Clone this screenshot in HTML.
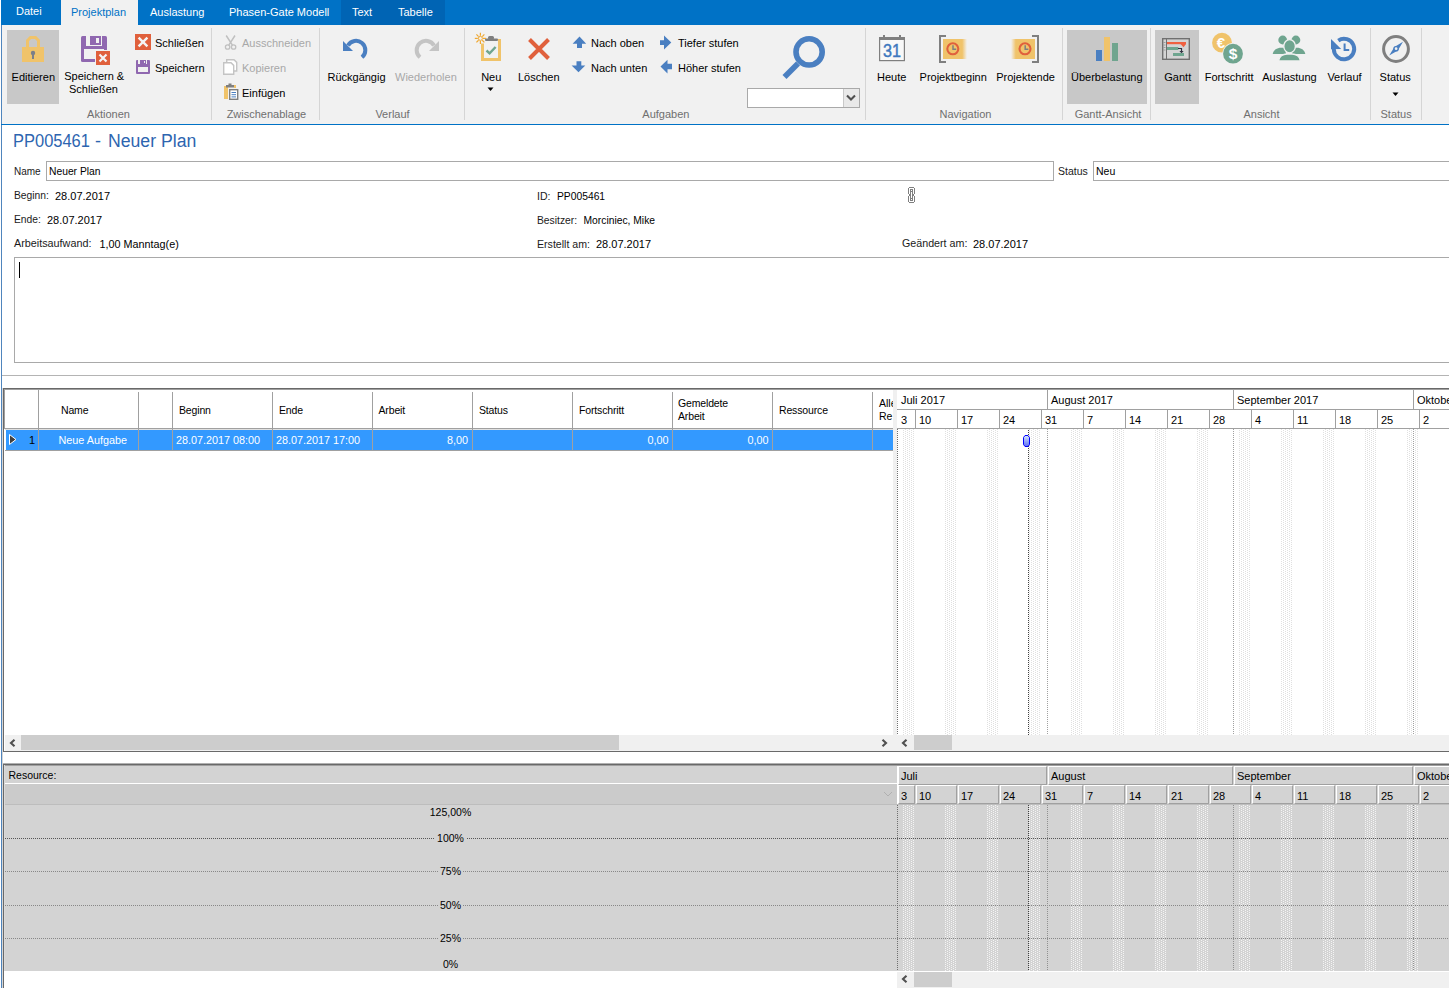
<!DOCTYPE html><html><head><meta charset="utf-8"><style>
html,body{margin:0;padding:0;}
body{width:1449px;height:988px;overflow:hidden;position:relative;background:#fff;font-family:"Liberation Sans", sans-serif;}
.a{position:absolute;}
.t{position:absolute;white-space:pre;}
svg{overflow:visible}
</style></head><body>
<div class="a" style="left:1px;top:0px;width:1448px;height:25px;background:#0072c6;"></div>
<div class="a" style="left:341px;top:0px;width:104px;height:25px;background:#0064b4;"></div>
<div class="a" style="left:61px;top:0px;width:77px;height:25px;background:#f1f1f1;"></div>
<div class="t" style="left:16px;top:6px;font-size:11px;line-height:11px;color:#fff;">Datei</div>
<div class="t" style="left:71px;top:7px;font-size:11px;line-height:11px;color:#0072c6;">Projektplan</div>
<div class="t" style="left:150px;top:7px;font-size:11px;line-height:11px;color:#fff;">Auslastung</div>
<div class="t" style="left:229px;top:7px;font-size:11px;line-height:11px;color:#fff;">Phasen-Gate Modell</div>
<div class="t" style="left:352px;top:7px;font-size:11px;line-height:11px;color:#fff;">Text</div>
<div class="t" style="left:398px;top:7px;font-size:11px;line-height:11px;color:#fff;">Tabelle</div>
<div class="a" style="left:2px;top:25px;width:1447px;height:99px;background:#f1f1f1;"></div>
<div class="a" style="left:1px;top:25px;width:1px;height:963px;background:#4f85bd;"></div>
<div class="a" style="left:1px;top:124px;width:1448px;height:1px;background:#0072c6;"></div>
<div class="a" style="left:211px;top:28px;width:1px;height:92px;background:#d5d5d5;"></div>
<div class="a" style="left:319px;top:28px;width:1px;height:92px;background:#d5d5d5;"></div>
<div class="a" style="left:464px;top:28px;width:1px;height:92px;background:#d5d5d5;"></div>
<div class="a" style="left:865px;top:28px;width:1px;height:92px;background:#d5d5d5;"></div>
<div class="a" style="left:1062px;top:28px;width:1px;height:92px;background:#d5d5d5;"></div>
<div class="a" style="left:1150px;top:28px;width:1px;height:92px;background:#d5d5d5;"></div>
<div class="a" style="left:1370px;top:28px;width:1px;height:92px;background:#d5d5d5;"></div>
<div class="a" style="left:1421px;top:28px;width:1px;height:92px;background:#d5d5d5;"></div>
<div class="a" style="left:7px;top:30px;width:52px;height:74px;background:#c8c8c8;"></div>
<div class="a" style="left:1067px;top:30px;width:80px;height:74px;background:#c8c8c8;"></div>
<div class="a" style="left:1155px;top:30px;width:44px;height:74px;background:#c8c8c8;"></div>
<div class="t" style="left:-26.700000000000003px;top:72px;width:120px;text-align:center;font-size:11px;line-height:11px;color:#000;">Editieren</div>
<div class="t" style="left:296.5px;top:72px;width:120px;text-align:center;font-size:11px;line-height:11px;color:#000;">Rückgängig</div>
<div class="t" style="left:431.25px;top:72px;width:120px;text-align:center;font-size:11px;line-height:11px;color:#000;">Neu</div>
<div class="t" style="left:478.79999999999995px;top:72px;width:120px;text-align:center;font-size:11px;line-height:11px;color:#000;">Löschen</div>
<div class="t" style="left:831.7px;top:72px;width:120px;text-align:center;font-size:11px;line-height:11px;color:#000;">Heute</div>
<div class="t" style="left:893.2px;top:72px;width:120px;text-align:center;font-size:11px;line-height:11px;color:#000;">Projektbeginn</div>
<div class="t" style="left:965.5999999999999px;top:72px;width:120px;text-align:center;font-size:11px;line-height:11px;color:#000;">Projektende</div>
<div class="t" style="left:1046.8px;top:72px;width:120px;text-align:center;font-size:11px;line-height:11px;color:#000;">Überbelastung</div>
<div class="t" style="left:1117.75px;top:72px;width:120px;text-align:center;font-size:11px;line-height:11px;color:#000;">Gantt</div>
<div class="t" style="left:1169.2px;top:72px;width:120px;text-align:center;font-size:11px;line-height:11px;color:#000;">Fortschritt</div>
<div class="t" style="left:1229.5px;top:72px;width:120px;text-align:center;font-size:11px;line-height:11px;color:#000;">Auslastung</div>
<div class="t" style="left:1284.5px;top:72px;width:120px;text-align:center;font-size:11px;line-height:11px;color:#000;">Verlauf</div>
<div class="t" style="left:1335.2px;top:72px;width:120px;text-align:center;font-size:11px;line-height:11px;color:#000;">Status</div>
<div class="t" style="left:365.9px;top:72px;width:120px;text-align:center;font-size:11px;line-height:11px;color:#a8a8a8;">Wiederholen</div>
<div class="t" style="left:34.25px;top:71px;width:120px;text-align:center;font-size:11px;line-height:11px;color:#000;">Speichern &amp;</div>
<div class="t" style="left:33.5px;top:84px;width:120px;text-align:center;font-size:11px;line-height:11px;color:#000;">Schließen</div>
<div class="t" style="left:155px;top:38px;font-size:11px;line-height:11px;color:#000;">Schließen</div>
<div class="t" style="left:155px;top:63px;font-size:11px;line-height:11px;color:#000;">Speichern</div>
<div class="t" style="left:242px;top:38px;font-size:11px;line-height:11px;color:#a8a8a8;">Ausschneiden</div>
<div class="t" style="left:242px;top:63px;font-size:11px;line-height:11px;color:#a8a8a8;">Kopieren</div>
<div class="t" style="left:242px;top:88px;font-size:11px;line-height:11px;color:#000;">Einfügen</div>
<div class="t" style="left:591px;top:38px;font-size:11px;line-height:11px;color:#000;">Nach oben</div>
<div class="t" style="left:591px;top:63px;font-size:11px;line-height:11px;color:#000;">Nach unten</div>
<div class="t" style="left:678px;top:38px;font-size:11px;line-height:11px;color:#000;">Tiefer stufen</div>
<div class="t" style="left:678px;top:63px;font-size:11px;line-height:11px;color:#000;">Höher stufen</div>
<div class="t" style="left:48.5px;top:109px;width:120px;text-align:center;font-size:11px;line-height:11px;color:#6f6f6f;">Aktionen</div>
<div class="t" style="left:206.39999999999998px;top:109px;width:120px;text-align:center;font-size:11px;line-height:11px;color:#6f6f6f;">Zwischenablage</div>
<div class="t" style="left:332.5px;top:109px;width:120px;text-align:center;font-size:11px;line-height:11px;color:#6f6f6f;">Verlauf</div>
<div class="t" style="left:605.9px;top:109px;width:120px;text-align:center;font-size:11px;line-height:11px;color:#6f6f6f;">Aufgaben</div>
<div class="t" style="left:905.5px;top:109px;width:120px;text-align:center;font-size:11px;line-height:11px;color:#6f6f6f;">Navigation</div>
<div class="t" style="left:1048.0px;top:109px;width:120px;text-align:center;font-size:11px;line-height:11px;color:#6f6f6f;">Gantt-Ansicht</div>
<div class="t" style="left:1201.5px;top:109px;width:120px;text-align:center;font-size:11px;line-height:11px;color:#6f6f6f;">Ansicht</div>
<div class="t" style="left:1336.1px;top:109px;width:120px;text-align:center;font-size:11px;line-height:11px;color:#6f6f6f;">Status</div>
<svg class="a" style="left:487px;top:87px" width="7" height="5" viewBox="0 0 7 5"><path d="M0.5 0.5h6l-3 3.5z" fill="#000"/></svg>
<svg class="a" style="left:1392px;top:92px" width="7" height="5" viewBox="0 0 7 5"><path d="M0.5 0.5h6l-3 3.5z" fill="#000"/></svg>
<div class="a" style="left:747px;top:88px;width:113px;height:20px;background:#fff;box-sizing:border-box;border:1px solid #a9a9a9;"></div>
<div class="a" style="left:843px;top:89px;width:16px;height:18px;background:#e9e9e9;border-left:1px solid #c9c9c9;box-sizing:border-box;"></div>
<svg class="a" style="left:846px;top:94px" width="10" height="8" viewBox="0 0 10 8"><path d="M1 1.5l4 4 4-4" fill="none" stroke="#505050" stroke-width="2.1"/></svg>
<svg class="a" style="left:0;top:0" width="1449" height="125" viewBox="0 0 1449 125">
<!-- lock -->
<rect x="22" y="47" width="22" height="15" fill="#f0c36a"/>
<path d="M27.5 47V40.5L30.5 37.5H35.5L38.5 40.5V47" fill="none" stroke="#f0c36a" stroke-width="3"/>
<circle cx="33" cy="53" r="2.2" fill="#7b7f8a"/><rect x="32" y="53" width="2" height="6" fill="#7b7f8a"/>
<!-- save & close -->
<rect x="81" y="36" width="26" height="26" rx="1.5" fill="#9068b0"/>
<rect x="86" y="36" width="4" height="10" fill="#f1f1f1"/>
<rect x="90" y="45" width="11" height="1" fill="#f1f1f1"/>
<rect x="101" y="36" width="1" height="10" fill="#f1f1f1"/>
<rect x="96" y="38" width="3" height="5" fill="#f1f1f1"/>
<rect x="84" y="49" width="20" height="10" fill="#f1f1f1"/>
<rect x="95" y="50" width="16" height="16" fill="#f1f1f1"/>
<rect x="96" y="51" width="14" height="14" fill="#e0603c"/>
<path d="M99.5 54.5L106.5 61.5M106.5 54.5L99.5 61.5" stroke="#f4f4f4" stroke-width="2.2"/>
<!-- small close -->
<rect x="135" y="34" width="16" height="16" fill="#e0603c"/>
<path d="M138.6 37.6L147.4 46.4M147.4 37.6L138.6 46.4" stroke="#f4f4f4" stroke-width="2.4"/>
<!-- small save -->
<rect x="136" y="60" width="14" height="14" rx="1" fill="#9068b0"/>
<rect x="138" y="60" width="2" height="4" fill="#f1f1f1"/>
<rect x="146" y="60" width="1" height="4" fill="#f1f1f1"/>
<rect x="144" y="61" width="1" height="2" fill="#f1f1f1"/>
<rect x="138" y="67" width="10" height="5" fill="#f1f1f1"/>
<!-- scissors -->
<g stroke="#c0c0c0" fill="none" stroke-width="1.3">
<circle cx="227.6" cy="47" r="2.2"/><circle cx="233.6" cy="47" r="2.2"/>
<path d="M228.8 45.2L235 35.5M232.4 45.2L226.2 35.5" stroke-width="1.5"/>
</g>
<!-- copy -->
<g stroke="#c4c4c4" stroke-width="1.4" fill="#fff">
<path d="M226.7 59.7H234L236.7 62.4V71H226.7Z"/>
<path d="M223.7 62.7H231L233.7 65.4V74.3H223.7Z"/>
</g>
<!-- paste -->
<rect x="224" y="86" width="4" height="13" fill="#f0c36a"/>
<rect x="234" y="85" width="2" height="3" fill="#f0c36a"/>
<rect x="226" y="85" width="8" height="2.5" fill="#7f7f7f"/><rect x="228.5" y="83.5" width="3" height="2" fill="#7f7f7f"/>
<rect x="229.7" y="89.7" width="8" height="9.6" fill="#fff" stroke="#7f7f7f" stroke-width="1.4"/>
<path d="M231.5 92.5H236M231.5 94.7H236M231.5 96.9H236" stroke="#4a7fc1" stroke-width="1"/>
<!-- undo / redo -->
<path d="M343 41L343 51L353 51Z" fill="#4a7fc1"/>
<path d="M347.95 45.55A9.3 9.3 0 1 1 361.98 57.32" fill="none" stroke="#4a7fc1" stroke-width="4"/>
<path d="M439 41L439 51L429 51Z" fill="#c4c4c4"/>
<path d="M434.05 45.55A9.3 9.3 0 1 0 420.02 57.32" fill="none" stroke="#c4c4c4" stroke-width="4"/>
<!-- neu -->
<path d="M482.5 43.5V59.5H499.5V39" fill="none" stroke="#f0c36a" stroke-width="3"/>
<rect x="485" y="38.5" width="13" height="2.5" rx="1" fill="#7f7f7f"/><rect x="488" y="36" width="6" height="3.5" rx="1.5" fill="#7f7f7f"/>
<path d="M486.5 50.5L489.6 53.4L495.6 47" fill="none" stroke="#6fa58f" stroke-width="2.4"/>
<g stroke="#f0a830" stroke-width="1.2"><line x1="483.00" y1="38.40" x2="486.00" y2="38.40"/><line x1="482.24" y1="40.24" x2="484.36" y2="42.36"/><line x1="480.40" y1="41.00" x2="480.40" y2="44.00"/><line x1="478.56" y1="40.24" x2="476.44" y2="42.36"/><line x1="477.80" y1="38.40" x2="474.80" y2="38.40"/><line x1="478.56" y1="36.56" x2="476.44" y2="34.44"/><line x1="480.40" y1="35.80" x2="480.40" y2="32.80"/><line x1="482.24" y1="36.56" x2="484.36" y2="34.44"/></g>
<circle cx="480.4" cy="38.4" r="2" fill="none" stroke="#f0a830" stroke-width="1"/>
<!-- loeschen -->
<path d="M529.5 39.5L548.5 58.5M548.5 39.5L529.5 58.5" stroke="#e0603c" stroke-width="4"/>
<!-- arrows -->
<path d="M579.5 36.5L586.2 43.8H582V48H577V43.8H572.6Z" fill="#4a7fc1"/>
<path d="M576.5 61.2H581.3V65.4H585.3L578.5 72.2L571.6 65.4H576.5Z" fill="#4a7fc1"/>
<path d="M660 40.2H664V35.6L671.3 42.5L664 49.5V45H660Z" fill="#4a7fc1"/>
<path d="M660.5 66.5L667.5 59.7V63.7H672V69.2H667.5V73.4Z" fill="#4a7fc1"/>
<!-- magnifier -->
<circle cx="809.1" cy="51.9" r="13.1" fill="none" stroke="#4a7fc1" stroke-width="5.6"/>
<path d="M798 63.5L784.5 77" stroke="#4a7fc1" stroke-width="5.6"/>
<!-- calendar -->
<rect x="879.6" y="37.6" width="24.8" height="23" fill="#f8f8f8" stroke="#7f7f7f" stroke-width="1.2"/>
<rect x="879" y="37" width="26" height="3" fill="#7f7f7f"/>
<rect x="883" y="35" width="2" height="3" fill="#7f7f7f"/><rect x="899" y="35" width="2" height="3" fill="#7f7f7f"/>
<text x="892" y="57" font-family="Liberation Sans" font-size="18" fill="#3f78bf" stroke="#3f78bf" stroke-width="0.45" text-anchor="middle" textLength="18" lengthAdjust="spacingAndGlyphs">31</text>
<!-- projektbeginn / ende -->
<defs>
<linearGradient id="gr" x1="0" x2="1"><stop offset="0.8" stop-color="#f0c36a"/><stop offset="1" stop-color="#f0c36a" stop-opacity="0"/></linearGradient>
<linearGradient id="gl" x1="1" x2="0"><stop offset="0.8" stop-color="#f0c36a"/><stop offset="1" stop-color="#f0c36a" stop-opacity="0"/></linearGradient>
</defs>
<rect x="943" y="39" width="24" height="20" fill="url(#gr)"/>
<path d="M946 36H940V62H946" fill="none" stroke="#7f7f7f" stroke-width="2"/>
<circle cx="952.8" cy="48.8" r="5.5" fill="none" stroke="#e0603c" stroke-width="2.1"/>
<path d="M953 45.3V49.2H956.2" fill="none" stroke="#7f7f7f" stroke-width="1.5"/>
<rect x="1011" y="39" width="24" height="20" fill="url(#gl)"/>
<path d="M1032 36H1038V62H1032" fill="none" stroke="#7f7f7f" stroke-width="2"/>
<circle cx="1025" cy="48.8" r="5.5" fill="none" stroke="#e0603c" stroke-width="2.1"/>
<path d="M1025.2 45.3V49.2H1028.4" fill="none" stroke="#7f7f7f" stroke-width="1.5"/>
<!-- chart -->
<rect x="1096" y="50" width="6" height="11" fill="#4a7fc1"/>
<rect x="1104" y="37" width="6" height="24" fill="#f0c36a"/>
<rect x="1112" y="43" width="6" height="18" fill="#6fa58f"/>
<!-- gantt -->
<rect x="1162.7" y="38.7" width="26.6" height="20.6" fill="#d4d4d4" stroke="#707070" stroke-width="1.4"/>
<path d="M1166.5 39V59" stroke="#707070" stroke-width="1"/>
<path d="M1163.5 42.5H1165.5M1163.5 45H1165.5M1163.5 47.5H1165.5M1163.5 50H1165.5" stroke="#909090" stroke-width="0.8"/>
<rect x="1167" y="42" width="19" height="2.2" fill="#f06040"/>
<path d="M1180.5 44H1186L1183.6 47.2Z" fill="#f06040"/>
<rect x="1167" y="47" width="11.3" height="3" fill="#6fa58f"/>
<path d="M1178 48.5H1181.5V51.5" fill="none" stroke="#303040" stroke-width="1.2"/>
<path d="M1179.4 51H1183.6L1181.5 53.3Z" fill="#303040"/>
<rect x="1173" y="53" width="11" height="3" fill="#6fa58f"/>
<!-- coins -->
<circle cx="1222" cy="42.7" r="9.9" fill="#f0c36a"/>
<text x="1221" y="48.3" font-family="Liberation Sans" font-weight="bold" font-size="15" fill="#fff" text-anchor="middle">€</text>
<circle cx="1233" cy="53.7" r="10.6" fill="#f1f1f1"/>
<circle cx="1233" cy="53.7" r="9.9" fill="#6fa58f"/>
<text x="1233" y="59.3" font-family="Liberation Sans" font-weight="bold" font-size="15.5" fill="#fff" text-anchor="middle">$</text>
<!-- people -->
<g fill="#6fa58f">
<circle cx="1282.7" cy="40" r="4.4"/><circle cx="1295.9" cy="40" r="4.4"/>
<path d="M1272.7 54C1273.5 50 1277 47.8 1281 47.8H1285L1286 54Z"/>
<path d="M1305.3 54C1304.5 50 1301 47.8 1297 47.8H1293L1292 54Z"/>
<ellipse cx="1289.6" cy="46.2" rx="5.8" ry="6.6" stroke="#f1f1f1" stroke-width="1.3"/>
<path d="M1278.5 61C1279 56.5 1283 54 1287 54H1292C1296 54 1300 56.5 1300.5 61Z" stroke="#f1f1f1" stroke-width="1.3"/>
</g>
<!-- history -->
<path d="M1331 39L1331 49.2L1341.2 49Z" fill="#4a7fc1"/>
<path d="M1333.80 49.00A10.2 10.2 0 1 0 1338.30 40.54" fill="none" stroke="#4a7fc1" stroke-width="3.9"/>
<path d="M1344.6 43.5V50H1349.2" fill="none" stroke="#4a7fc1" stroke-width="2"/>
<!-- compass -->
<circle cx="1396" cy="49" r="12.4" fill="none" stroke="#7f7f7f" stroke-width="3"/>
<path d="M1403 41.8L1397.8 50.4L1389.2 55.6L1394.4 47Z" fill="#4a7fc1"/>
<circle cx="1396.1" cy="48.7" r="2.1" fill="#f1f1f1" stroke="#4a7fc1" stroke-width="1.4"/>
</svg>
<div class="t" style="left:13px;top:132px;font-size:18px;line-height:18px;color:#2d65b0"><span style="position:absolute;left:0;display:inline-block;transform-origin:0 0;transform:scaleX(0.915)">PP005461</span><span style="position:absolute;left:82px">-</span><span style="position:absolute;left:95px;display:inline-block;transform-origin:0 0;transform:scaleX(0.98)">Neuer Plan</span></div>
<div class="t" style="left:14px;top:167px;font-size:10px;line-height:10px;color:#1a1a1a;">Name</div>
<div class="a" style="left:46px;top:161px;width:1008px;height:20px;background:#fff;box-sizing:border-box;border:1px solid #a9a9a9;"></div>
<div class="t" style="left:49px;top:167px;font-size:10.3px;line-height:10.3px;color:#000;">Neuer Plan</div>
<div class="t" style="left:1058px;top:166px;font-size:10.5px;line-height:10.5px;color:#1a1a1a;">Status</div>
<div class="a" style="left:1093px;top:161px;width:370px;height:20px;background:#fff;box-sizing:border-box;border:1px solid #a9a9a9;"></div>
<div class="t" style="left:1096px;top:166px;font-size:10.5px;line-height:10.5px;color:#000;">Neu</div>
<div class="t" style="left:14px;top:191px;font-size:10.3px;line-height:10.3px;color:#1a1a1a;">Beginn:</div>
<div class="t" style="left:55px;top:191px;font-size:11px;line-height:11px;color:#000;">28.07.2017</div>
<div class="t" style="left:14px;top:215px;font-size:10.3px;line-height:10.3px;color:#1a1a1a;">Ende:</div>
<div class="t" style="left:47px;top:215px;font-size:11px;line-height:11px;color:#000;">28.07.2017</div>
<div class="t" style="left:14px;top:238px;font-size:10.8px;line-height:10.8px;color:#1a1a1a;">Arbeitsaufwand:</div>
<div class="t" style="left:99.5px;top:239px;font-size:10.8px;line-height:10.8px;color:#000;">1,00 Manntag(e)</div>
<div class="t" style="left:537px;top:191px;font-size:10.5px;line-height:10.5px;color:#1a1a1a;">ID:</div>
<div class="t" style="left:557px;top:192px;font-size:10.3px;line-height:10.3px;color:#000;">PP005461</div>
<div class="t" style="left:537px;top:216px;font-size:10.3px;line-height:10.3px;color:#1a1a1a;">Besitzer:</div>
<div class="t" style="left:583.5px;top:216px;font-size:10.3px;line-height:10.3px;color:#000;">Morciniec, Mike</div>
<div class="t" style="left:537px;top:239px;font-size:10.6px;line-height:10.6px;color:#1a1a1a;">Erstellt am:</div>
<div class="t" style="left:596px;top:239px;font-size:11px;line-height:11px;color:#000;">28.07.2017</div>
<div class="t" style="left:902px;top:238px;font-size:10.7px;line-height:10.7px;color:#1a1a1a;">Geändert am:</div>
<div class="t" style="left:973px;top:239px;font-size:11px;line-height:11px;color:#000;">28.07.2017</div>
<svg class="a" style="left:906px;top:186px" width="11" height="18" viewBox="0 0 11 18"><g fill="#7f7f7f" shape-rendering="crispEdges"><rect x="3" y="1" width="5" height="1"/><rect x="3" y="16" width="5" height="1"/><rect x="2" y="2" width="1" height="6"/><rect x="8" y="2" width="1" height="6"/><rect x="3" y="8" width="1" height="2"/><rect x="7" y="8" width="1" height="2"/><rect x="2" y="10" width="1" height="6"/><rect x="8" y="10" width="1" height="6"/><rect x="4" y="3" width="3" height="12"/></g><g fill="#fff" shape-rendering="crispEdges"><rect x="5" y="4" width="1" height="1"/><rect x="5" y="13" width="1" height="1"/><rect x="5" y="6" width="1" height="6"/></g></svg>
<div class="a" style="left:14px;top:257px;width:1449px;height:106px;background:#fff;box-sizing:border-box;border:1px solid #a9a9a9;"></div>
<div class="a" style="left:19px;top:262px;width:1px;height:16px;background:#000;"></div>
<div class="a" style="left:2px;top:375px;width:1447px;height:1px;background:#b4b4b4;"></div>
<div class="a" style="left:3px;top:388px;width:1446px;height:1px;background:#696969;"></div>
<div class="a" style="left:3px;top:388px;width:1px;height:364px;background:#696969;"></div>
<div class="a" style="left:4px;top:389px;width:1445px;height:1px;background:#a0a0a0;"></div>
<div class="a" style="left:4px;top:389px;width:1px;height:40px;background:#a0a0a0;"></div>
<div class="a" style="left:2px;top:388px;width:1px;height:600px;background:#d6d6d6;"></div>
<div class="a" style="left:3px;top:751px;width:1446px;height:1px;background:#696969;"></div>
<div class="a" style="left:5px;top:428px;width:888px;height:1px;background:#a0a0a0;"></div>
<div class="a" style="left:5px;top:429px;width:888px;height:1px;background:#e0e0e0;"></div>
<div class="a" style="left:6px;top:430px;width:887px;height:20px;background:#3399ff;"></div>
<div class="a" style="left:5px;top:450px;width:888px;height:1px;background:#a0a0a0;"></div>
<div class="a" style="left:38px;top:390px;width:1px;height:60px;background:#a0a0a0;"></div>
<div class="a" style="left:138px;top:392px;width:1px;height:58px;background:#a0a0a0;"></div>
<div class="a" style="left:172px;top:392px;width:1px;height:58px;background:#a0a0a0;"></div>
<div class="a" style="left:272px;top:392px;width:1px;height:58px;background:#a0a0a0;"></div>
<div class="a" style="left:372px;top:392px;width:1px;height:58px;background:#a0a0a0;"></div>
<div class="a" style="left:472px;top:392px;width:1px;height:58px;background:#a0a0a0;"></div>
<div class="a" style="left:572px;top:392px;width:1px;height:58px;background:#a0a0a0;"></div>
<div class="a" style="left:672px;top:392px;width:1px;height:58px;background:#a0a0a0;"></div>
<div class="a" style="left:772px;top:392px;width:1px;height:58px;background:#a0a0a0;"></div>
<div class="a" style="left:872px;top:392px;width:1px;height:58px;background:#a0a0a0;"></div>
<div class="t" style="left:61px;top:405px;font-size:10.5px;line-height:10.5px;color:#000;letter-spacing:-0.15px">Name</div>
<div class="t" style="left:179px;top:405px;font-size:10.5px;line-height:10.5px;color:#000;letter-spacing:-0.15px">Beginn</div>
<div class="t" style="left:279px;top:405px;font-size:10.5px;line-height:10.5px;color:#000;letter-spacing:-0.15px">Ende</div>
<div class="t" style="left:378.5px;top:405px;font-size:10.5px;line-height:10.5px;color:#000;letter-spacing:-0.15px">Arbeit</div>
<div class="t" style="left:479px;top:405px;font-size:10.5px;line-height:10.5px;color:#000;letter-spacing:-0.15px">Status</div>
<div class="t" style="left:579px;top:405px;font-size:10.5px;line-height:10.5px;color:#000;letter-spacing:-0.15px">Fortschritt</div>
<div class="t" style="left:779px;top:405px;font-size:10.5px;line-height:10.5px;color:#000;letter-spacing:-0.15px">Ressource</div>
<div class="t" style="left:678px;top:398px;font-size:10.5px;line-height:10.5px;color:#000;letter-spacing:-0.15px">Gemeldete</div>
<div class="t" style="left:678px;top:411px;font-size:10.5px;line-height:10.5px;color:#000;letter-spacing:-0.15px">Arbeit</div>
<div class="a" style="left:873px;top:390px;width:20px;height:38px;overflow:hidden">
<div class="t" style="left:6px;top:8px;font-size:10.5px;line-height:10.5px;color:#000;">Alle</div>
<div class="t" style="left:6px;top:21px;font-size:10.5px;line-height:10.5px;color:#000;">Re</div>
</div>
<svg class="a" style="left:8px;top:433px" width="10" height="13" viewBox="0 0 10 13"><path d="M1.5 1.5L8 6.5L1.5 11.5Z" fill="#404040" stroke="#fff" stroke-width="1"/></svg>
<div class="t" style="left:15px;top:435px;width:20px;text-align:right;font-size:11px;line-height:11px;color:#000;">1</div>
<div class="t" style="left:58.5px;top:435px;font-size:10.8px;line-height:10.8px;color:#fff;">Neue Aufgabe</div>
<div class="t" style="left:176px;top:435px;font-size:10.8px;line-height:10.8px;color:#fff;">28.07.2017 08:00</div>
<div class="t" style="left:276px;top:435px;font-size:10.8px;line-height:10.8px;color:#fff;">28.07.2017 17:00</div>
<div class="t" style="left:408px;top:435px;width:60px;text-align:right;font-size:10.8px;line-height:10.8px;color:#fff;">8,00</div>
<div class="t" style="left:608.5px;top:435px;width:60px;text-align:right;font-size:10.8px;line-height:10.8px;color:#fff;">0,00</div>
<div class="t" style="left:708.5px;top:435px;width:60px;text-align:right;font-size:10.8px;line-height:10.8px;color:#fff;">0,00</div>
<div class="a" style="left:893px;top:390px;width:4px;height:361px;background:#f0f0f0;"></div>
<svg class="a" style="left:897px;top:429px" width="552" height="306"><defs><pattern id="wk1" patternUnits="userSpaceOnUse" x="0" y="0" width="4" height="2"><rect x="0" y="0" width="1" height="1" fill="#e0e0e0"/><rect x="2" y="1" width="1" height="1" fill="#e0e0e0"/></pattern></defs><rect x="6" y="0" width="12" height="306" fill="url(#wk1)"/><rect x="48" y="0" width="12" height="306" fill="url(#wk1)"/><rect x="90" y="0" width="12" height="306" fill="url(#wk1)"/><rect x="132" y="0" width="12" height="306" fill="url(#wk1)"/><rect x="174" y="0" width="12" height="306" fill="url(#wk1)"/><rect x="216" y="0" width="12" height="306" fill="url(#wk1)"/><rect x="258" y="0" width="12" height="306" fill="url(#wk1)"/><rect x="300" y="0" width="12" height="306" fill="url(#wk1)"/><rect x="342" y="0" width="12" height="306" fill="url(#wk1)"/><rect x="384" y="0" width="12" height="306" fill="url(#wk1)"/><rect x="426" y="0" width="12" height="306" fill="url(#wk1)"/><rect x="468" y="0" width="12" height="306" fill="url(#wk1)"/><rect x="510" y="0" width="12" height="306" fill="url(#wk1)"/><rect x="552" y="0" width="12" height="306" fill="url(#wk1)"/></svg>
<div class="a" style="left:897px;top:409px;width:552px;height:1px;background:#a0a0a0;"></div>
<div class="a" style="left:897px;top:428px;width:552px;height:1px;background:#a0a0a0;"></div>
<div class="a" style="left:1047px;top:390px;width:1px;height:19px;background:#a0a0a0;"></div>
<div class="a" style="left:1233px;top:390px;width:1px;height:19px;background:#a0a0a0;"></div>
<div class="a" style="left:1413px;top:390px;width:1px;height:19px;background:#a0a0a0;"></div>
<div class="t" style="left:901px;top:395px;font-size:11px;line-height:11px;color:#000;">Juli 2017</div>
<div class="t" style="left:1051px;top:395px;font-size:11px;line-height:11px;color:#000;">August 2017</div>
<div class="t" style="left:1237px;top:395px;font-size:11px;line-height:11px;color:#000;">September 2017</div>
<div class="t" style="left:1417px;top:395px;font-size:11px;line-height:11px;color:#000;">Oktober 2017</div>
<div class="a" style="left:915px;top:410px;width:1px;height:18px;background:#a0a0a0;"></div>
<div class="a" style="left:957px;top:410px;width:1px;height:18px;background:#a0a0a0;"></div>
<div class="a" style="left:999px;top:410px;width:1px;height:18px;background:#a0a0a0;"></div>
<div class="a" style="left:1041px;top:410px;width:1px;height:18px;background:#a0a0a0;"></div>
<div class="a" style="left:1083px;top:410px;width:1px;height:18px;background:#a0a0a0;"></div>
<div class="a" style="left:1125px;top:410px;width:1px;height:18px;background:#a0a0a0;"></div>
<div class="a" style="left:1167px;top:410px;width:1px;height:18px;background:#a0a0a0;"></div>
<div class="a" style="left:1209px;top:410px;width:1px;height:18px;background:#a0a0a0;"></div>
<div class="a" style="left:1251px;top:410px;width:1px;height:18px;background:#a0a0a0;"></div>
<div class="a" style="left:1293px;top:410px;width:1px;height:18px;background:#a0a0a0;"></div>
<div class="a" style="left:1335px;top:410px;width:1px;height:18px;background:#a0a0a0;"></div>
<div class="a" style="left:1377px;top:410px;width:1px;height:18px;background:#a0a0a0;"></div>
<div class="a" style="left:1419px;top:410px;width:1px;height:18px;background:#a0a0a0;"></div>
<div class="t" style="left:901px;top:415px;font-size:11px;line-height:11px;color:#000;">3</div>
<div class="t" style="left:919px;top:415px;font-size:11px;line-height:11px;color:#000;">10</div>
<div class="t" style="left:961px;top:415px;font-size:11px;line-height:11px;color:#000;">17</div>
<div class="t" style="left:1003px;top:415px;font-size:11px;line-height:11px;color:#000;">24</div>
<div class="t" style="left:1045px;top:415px;font-size:11px;line-height:11px;color:#000;">31</div>
<div class="t" style="left:1087px;top:415px;font-size:11px;line-height:11px;color:#000;">7</div>
<div class="t" style="left:1129px;top:415px;font-size:11px;line-height:11px;color:#000;">14</div>
<div class="t" style="left:1171px;top:415px;font-size:11px;line-height:11px;color:#000;">21</div>
<div class="t" style="left:1213px;top:415px;font-size:11px;line-height:11px;color:#000;">28</div>
<div class="t" style="left:1255px;top:415px;font-size:11px;line-height:11px;color:#000;">4</div>
<div class="t" style="left:1297px;top:415px;font-size:11px;line-height:11px;color:#000;">11</div>
<div class="t" style="left:1339px;top:415px;font-size:11px;line-height:11px;color:#000;">18</div>
<div class="t" style="left:1381px;top:415px;font-size:11px;line-height:11px;color:#000;">25</div>
<div class="t" style="left:1423px;top:415px;font-size:11px;line-height:11px;color:#000;">2</div>
<div class="a" style="left:897px;top:429px;width:1px;height:306px;background:repeating-linear-gradient(180deg,#707070 0 1px,transparent 1px 2px)"></div>
<div class="a" style="left:1028px;top:430px;width:1px;height:305px;background:repeating-linear-gradient(180deg,#404040 0 1px,transparent 1px 2px)"></div>
<div class="a" style="left:1047px;top:429px;width:1px;height:306px;background:repeating-linear-gradient(180deg,#a0a0a0 0 1px,transparent 1px 2px)"></div>
<div class="a" style="left:1233px;top:429px;width:1px;height:306px;background:repeating-linear-gradient(180deg,#a0a0a0 0 1px,transparent 1px 2px)"></div>
<div class="a" style="left:1413px;top:429px;width:1px;height:306px;background:repeating-linear-gradient(180deg,#a0a0a0 0 1px,transparent 1px 2px)"></div>
<svg class="a" style="left:1023px;top:435px" width="7" height="12" viewBox="0 0 7 12"><defs><linearGradient id="ms" x1="0" y1="0" x2="0" y2="1"><stop offset="0" stop-color="#d8e8ff"/><stop offset="1" stop-color="#5a6cf0"/></linearGradient></defs><path d="M2 0.5H5L6.5 2.5V9.5L5 11.5H2L0.5 9.5V2.5Z" fill="url(#ms)" stroke="#0000ff" stroke-width="1"/></svg>
<div class="a" style="left:5px;top:735px;width:888px;height:16px;background:#f0f0f0;"></div>
<div class="a" style="left:21px;top:735px;width:598px;height:15px;background:#cdcdcd;"></div>
<svg class="a" style="left:9px;top:739px" width="8" height="8" viewBox="0 0 8 8"><path d="M5.5 0.8L2 4L5.5 7.2" fill="none" stroke="#505050" stroke-width="2.1"/></svg>
<svg class="a" style="left:880px;top:739px" width="8" height="8" viewBox="0 0 8 8"><path d="M2.5 0.8L6 4L2.5 7.2" fill="none" stroke="#505050" stroke-width="2.1"/></svg>
<div class="a" style="left:897px;top:735px;width:552px;height:16px;background:#f0f0f0;"></div>
<div class="a" style="left:914px;top:735px;width:38px;height:15px;background:#cdcdcd;"></div>
<svg class="a" style="left:901px;top:739px" width="8" height="8" viewBox="0 0 8 8"><path d="M5.5 0.8L2 4L5.5 7.2" fill="none" stroke="#505050" stroke-width="2.1"/></svg>
<div class="a" style="left:3px;top:763px;width:1446px;height:1px;background:#b0b0b0;"></div>
<div class="a" style="left:3px;top:764px;width:1446px;height:1px;background:#696969;"></div>
<div class="a" style="left:4px;top:765px;width:1445px;height:1px;background:#a0a0a0;"></div>
<div class="a" style="left:3px;top:764px;width:1px;height:224px;background:#696969;"></div>
<div class="a" style="left:4px;top:765px;width:1px;height:206px;background:#dadada;"></div>
<div class="a" style="left:5px;top:766px;width:892px;height:17px;background:#d3d3d3;"></div>
<div class="a" style="left:5px;top:783px;width:892px;height:1px;background:#ffffff;"></div>
<div class="a" style="left:5px;top:784px;width:892px;height:20px;background:#cbcbcb;"></div>
<div class="a" style="left:5px;top:804px;width:1444px;height:1px;background:#bdbdbd;"></div>
<div class="t" style="left:8.5px;top:770px;font-size:10.5px;line-height:10.5px;color:#000;">Resource:</div>
<svg class="a" style="left:883px;top:791px" width="10" height="7" viewBox="0 0 10 7"><path d="M1 1L5 5L9 1" fill="none" stroke="#b0b0b0" stroke-width="1"/></svg>
<div class="a" style="left:897px;top:766px;width:552px;height:38px;background:#d3d3d3;"></div>
<div class="a" style="left:897px;top:766px;width:1px;height:38px;background:#fff;"></div>
<div class="a" style="left:898px;top:766px;width:149px;height:19px;box-sizing:border-box;border-top:1px solid #fff;border-left:1px solid #fff;border-right:1px solid #a0a0a0;border-bottom:1px solid #a0a0a0;background:#d3d3d3"></div>
<div class="t" style="left:901px;top:771px;font-size:11px;line-height:11px;color:#000;">Juli</div>
<div class="a" style="left:1048px;top:766px;width:185px;height:19px;box-sizing:border-box;border-top:1px solid #fff;border-left:1px solid #fff;border-right:1px solid #a0a0a0;border-bottom:1px solid #a0a0a0;background:#d3d3d3"></div>
<div class="t" style="left:1051px;top:771px;font-size:11px;line-height:11px;color:#000;">August</div>
<div class="a" style="left:1234px;top:766px;width:179px;height:19px;box-sizing:border-box;border-top:1px solid #fff;border-left:1px solid #fff;border-right:1px solid #a0a0a0;border-bottom:1px solid #a0a0a0;background:#d3d3d3"></div>
<div class="t" style="left:1237px;top:771px;font-size:11px;line-height:11px;color:#000;">September</div>
<div class="a" style="left:1414px;top:766px;width:235px;height:19px;box-sizing:border-box;border-top:1px solid #fff;border-left:1px solid #fff;border-right:1px solid #a0a0a0;border-bottom:1px solid #a0a0a0;background:#d3d3d3"></div>
<div class="t" style="left:1417px;top:771px;font-size:11px;line-height:11px;color:#000;">Oktober</div>
<div class="a" style="left:898px;top:785px;width:17px;height:19px;box-sizing:border-box;border-top:1px solid #fff;border-left:1px solid #fff;border-right:1px solid #a0a0a0;border-bottom:1px solid #a0a0a0;background:#d3d3d3"></div>
<div class="a" style="left:916px;top:785px;width:41px;height:19px;box-sizing:border-box;border-top:1px solid #fff;border-left:1px solid #fff;border-right:1px solid #a0a0a0;border-bottom:1px solid #a0a0a0;background:#d3d3d3"></div>
<div class="a" style="left:958px;top:785px;width:41px;height:19px;box-sizing:border-box;border-top:1px solid #fff;border-left:1px solid #fff;border-right:1px solid #a0a0a0;border-bottom:1px solid #a0a0a0;background:#d3d3d3"></div>
<div class="a" style="left:1000px;top:785px;width:41px;height:19px;box-sizing:border-box;border-top:1px solid #fff;border-left:1px solid #fff;border-right:1px solid #a0a0a0;border-bottom:1px solid #a0a0a0;background:#d3d3d3"></div>
<div class="a" style="left:1042px;top:785px;width:41px;height:19px;box-sizing:border-box;border-top:1px solid #fff;border-left:1px solid #fff;border-right:1px solid #a0a0a0;border-bottom:1px solid #a0a0a0;background:#d3d3d3"></div>
<div class="a" style="left:1084px;top:785px;width:41px;height:19px;box-sizing:border-box;border-top:1px solid #fff;border-left:1px solid #fff;border-right:1px solid #a0a0a0;border-bottom:1px solid #a0a0a0;background:#d3d3d3"></div>
<div class="a" style="left:1126px;top:785px;width:41px;height:19px;box-sizing:border-box;border-top:1px solid #fff;border-left:1px solid #fff;border-right:1px solid #a0a0a0;border-bottom:1px solid #a0a0a0;background:#d3d3d3"></div>
<div class="a" style="left:1168px;top:785px;width:41px;height:19px;box-sizing:border-box;border-top:1px solid #fff;border-left:1px solid #fff;border-right:1px solid #a0a0a0;border-bottom:1px solid #a0a0a0;background:#d3d3d3"></div>
<div class="a" style="left:1210px;top:785px;width:41px;height:19px;box-sizing:border-box;border-top:1px solid #fff;border-left:1px solid #fff;border-right:1px solid #a0a0a0;border-bottom:1px solid #a0a0a0;background:#d3d3d3"></div>
<div class="a" style="left:1252px;top:785px;width:41px;height:19px;box-sizing:border-box;border-top:1px solid #fff;border-left:1px solid #fff;border-right:1px solid #a0a0a0;border-bottom:1px solid #a0a0a0;background:#d3d3d3"></div>
<div class="a" style="left:1294px;top:785px;width:41px;height:19px;box-sizing:border-box;border-top:1px solid #fff;border-left:1px solid #fff;border-right:1px solid #a0a0a0;border-bottom:1px solid #a0a0a0;background:#d3d3d3"></div>
<div class="a" style="left:1336px;top:785px;width:41px;height:19px;box-sizing:border-box;border-top:1px solid #fff;border-left:1px solid #fff;border-right:1px solid #a0a0a0;border-bottom:1px solid #a0a0a0;background:#d3d3d3"></div>
<div class="a" style="left:1378px;top:785px;width:41px;height:19px;box-sizing:border-box;border-top:1px solid #fff;border-left:1px solid #fff;border-right:1px solid #a0a0a0;border-bottom:1px solid #a0a0a0;background:#d3d3d3"></div>
<div class="a" style="left:1420px;top:785px;width:41px;height:19px;box-sizing:border-box;border-top:1px solid #fff;border-left:1px solid #fff;border-right:1px solid #a0a0a0;border-bottom:1px solid #a0a0a0;background:#d3d3d3"></div>
<div class="t" style="left:901px;top:791px;font-size:11px;line-height:11px;color:#000;">3</div>
<div class="t" style="left:919px;top:791px;font-size:11px;line-height:11px;color:#000;">10</div>
<div class="t" style="left:961px;top:791px;font-size:11px;line-height:11px;color:#000;">17</div>
<div class="t" style="left:1003px;top:791px;font-size:11px;line-height:11px;color:#000;">24</div>
<div class="t" style="left:1045px;top:791px;font-size:11px;line-height:11px;color:#000;">31</div>
<div class="t" style="left:1087px;top:791px;font-size:11px;line-height:11px;color:#000;">7</div>
<div class="t" style="left:1129px;top:791px;font-size:11px;line-height:11px;color:#000;">14</div>
<div class="t" style="left:1171px;top:791px;font-size:11px;line-height:11px;color:#000;">21</div>
<div class="t" style="left:1213px;top:791px;font-size:11px;line-height:11px;color:#000;">28</div>
<div class="t" style="left:1255px;top:791px;font-size:11px;line-height:11px;color:#000;">4</div>
<div class="t" style="left:1297px;top:791px;font-size:11px;line-height:11px;color:#000;">11</div>
<div class="t" style="left:1339px;top:791px;font-size:11px;line-height:11px;color:#000;">18</div>
<div class="t" style="left:1381px;top:791px;font-size:11px;line-height:11px;color:#000;">25</div>
<div class="t" style="left:1423px;top:791px;font-size:11px;line-height:11px;color:#000;">2</div>
<div class="a" style="left:5px;top:805px;width:892px;height:166px;background:#d3d3d3;"></div>
<div class="a" style="left:897px;top:805px;width:552px;height:166px;background:#d3d3d3;"></div>
<svg class="a" style="left:897px;top:805px" width="552" height="166"><defs><pattern id="wk2" patternUnits="userSpaceOnUse" x="0" y="0" width="4" height="2"><rect x="0" y="1" width="1" height="1" fill="#f4f4f4"/><rect x="2" y="0" width="1" height="1" fill="#f4f4f4"/></pattern></defs><rect x="6" y="0" width="12" height="166" fill="url(#wk2)"/><rect x="48" y="0" width="12" height="166" fill="url(#wk2)"/><rect x="90" y="0" width="12" height="166" fill="url(#wk2)"/><rect x="132" y="0" width="12" height="166" fill="url(#wk2)"/><rect x="174" y="0" width="12" height="166" fill="url(#wk2)"/><rect x="216" y="0" width="12" height="166" fill="url(#wk2)"/><rect x="258" y="0" width="12" height="166" fill="url(#wk2)"/><rect x="300" y="0" width="12" height="166" fill="url(#wk2)"/><rect x="342" y="0" width="12" height="166" fill="url(#wk2)"/><rect x="384" y="0" width="12" height="166" fill="url(#wk2)"/><rect x="426" y="0" width="12" height="166" fill="url(#wk2)"/><rect x="468" y="0" width="12" height="166" fill="url(#wk2)"/><rect x="510" y="0" width="12" height="166" fill="url(#wk2)"/><rect x="552" y="0" width="12" height="166" fill="url(#wk2)"/></svg>
<div class="a" style="left:5px;top:838px;width:1444px;height:1px;background:repeating-linear-gradient(90deg,#555 0 1px,transparent 1px 2px)"></div>
<div class="a" style="left:5px;top:871px;width:1444px;height:1px;background:repeating-linear-gradient(90deg,#888 0 1px,transparent 1px 2px)"></div>
<div class="a" style="left:5px;top:905px;width:1444px;height:1px;background:repeating-linear-gradient(90deg,#888 0 1px,transparent 1px 2px)"></div>
<div class="a" style="left:5px;top:938px;width:1444px;height:1px;background:repeating-linear-gradient(90deg,#888 0 1px,transparent 1px 2px)"></div>
<div class="a" style="left:897px;top:805px;width:1px;height:166px;background:repeating-linear-gradient(180deg,#707070 0 1px,transparent 1px 2px)"></div>
<div class="a" style="left:1028px;top:805px;width:1px;height:166px;background:repeating-linear-gradient(180deg,#404040 0 1px,transparent 1px 2px)"></div>
<div class="a" style="left:1047px;top:805px;width:1px;height:166px;background:repeating-linear-gradient(180deg,#909090 0 1px,transparent 1px 2px)"></div>
<div class="a" style="left:1233px;top:805px;width:1px;height:166px;background:repeating-linear-gradient(180deg,#909090 0 1px,transparent 1px 2px)"></div>
<div class="a" style="left:1413px;top:805px;width:1px;height:166px;background:repeating-linear-gradient(180deg,#909090 0 1px,transparent 1px 2px)"></div>
<div class="t" style="left:410.5px;top:807px;width:80px;text-align:center;font-size:10.5px;line-height:11px;color:#000"><span style="background:#d3d3d3;padding:0 2px">125,00%</span></div>
<div class="t" style="left:410.5px;top:833px;width:80px;text-align:center;font-size:10.5px;line-height:11px;color:#000"><span style="background:#d3d3d3;padding:0 2px">100%</span></div>
<div class="t" style="left:410.5px;top:866px;width:80px;text-align:center;font-size:10.5px;line-height:11px;color:#000"><span style="background:#d3d3d3;padding:0 2px">75%</span></div>
<div class="t" style="left:410.5px;top:900px;width:80px;text-align:center;font-size:10.5px;line-height:11px;color:#000"><span style="background:#d3d3d3;padding:0 2px">50%</span></div>
<div class="t" style="left:410.5px;top:933px;width:80px;text-align:center;font-size:10.5px;line-height:11px;color:#000"><span style="background:#d3d3d3;padding:0 2px">25%</span></div>
<div class="t" style="left:410.5px;top:959px;width:80px;text-align:center;font-size:10.5px;line-height:11px;color:#000"><span style="background:#d3d3d3;padding:0 2px">0%</span></div>
<div class="a" style="left:897px;top:971px;width:552px;height:17px;background:#f0f0f0;"></div>
<div class="a" style="left:897px;top:971px;width:552px;height:1px;background:#fff;"></div>
<div class="a" style="left:914px;top:972px;width:38px;height:15px;background:#cdcdcd;"></div>
<svg class="a" style="left:901px;top:975px" width="8" height="8" viewBox="0 0 8 8"><path d="M5.5 0.8L2 4L5.5 7.2" fill="none" stroke="#505050" stroke-width="2.1"/></svg>
</body></html>
